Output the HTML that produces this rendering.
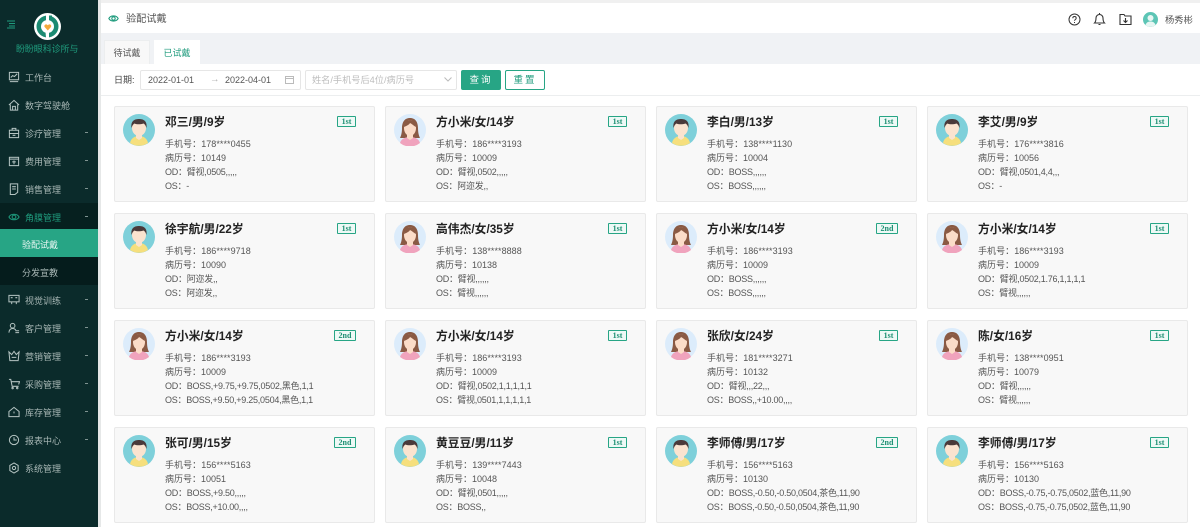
<!DOCTYPE html>
<html lang="zh"><head><meta charset="utf-8"><title>验配试戴</title>
<style>
*{box-sizing:border-box}
html,body{margin:0;padding:0}
body{width:1200px;height:527px;overflow:hidden;position:relative;background:#fff;font-family:"Liberation Sans","Noto Sans CJK SC",sans-serif;color:#555;filter:blur(.3px)}
.a{position:absolute;white-space:nowrap}
#side{left:0;top:0;width:98px;height:527px;background:#0b2b2b}
.m{position:absolute;left:0;width:98px;height:28px;line-height:28px;font-size:9px;color:#a9b8b6;white-space:nowrap}
.m span{position:absolute;left:25px;top:1px}
.m svg{position:absolute;left:8px;top:8px;width:12px;height:12px;fill:none;stroke:#b5c4c2;stroke-width:1.1}
.m i{position:absolute;left:85px;top:13px;width:3px;height:1px;background:#7f9391}
.card{position:absolute;width:261px;height:96px;background:#f8f8f8;border:1px solid #e9e9e9;border-radius:2px}
.card svg{position:absolute;left:8px;top:7px;width:32px;height:32px}
.card b{position:absolute;left:50px;top:7px;font-size:11.800px;line-height:16px;color:#222;white-space:nowrap;font-weight:700}
.card p{position:absolute;left:50px;margin:0;font-size:9px;line-height:14px;color:#555;white-space:nowrap}
.l1{top:30px;letter-spacing:.05px}.l2{top:44px}.l3{top:58px;letter-spacing:-.25px}.l4{top:72px;letter-spacing:-.25px}
.card em{position:absolute;left:222px;top:9px;width:19px;height:11px;border:1px solid #27a585;background:#eef9f6;border-radius:1px;color:#1b8f72;font:bold 8px/9px "Liberation Serif",serif;text-align:center}
.card em.n{left:219px;width:22px}
</style></head><body>
<svg width="0" height="0" style="position:absolute"><defs>
<g id="mm"><circle cx="16" cy="16" r="16" fill="#7ed0da"/><path d="M7 29c1-5 5-7 9-7s8 2 9 7a16 16 0 0 1-18 0z" fill="#f6df7d"/><path d="M13 20h6v4l-3 2-3-2z" fill="#fbe3cf"/><ellipse cx="16" cy="14" rx="7" ry="8" fill="#fbe3cf"/><path d="M8.500 14c-1-7 3-9 7.500-9s8.500 2 7.500 9c-1-3-2-4-3-4.500-3 1-7 1-9 0-1 .5-2 1.500-3 4.500z" fill="#4a3a3a"/></g>
<g id="ff"><circle cx="16" cy="16" r="16" fill="#dcecfb"/><path d="M16 4c-6 0-8 5-8 10 0 5-1 8-2 10h20c-1-2-2-5-2-10 0-5-2-10-8-10z" fill="#8a5a44"/><path d="M6 29c1-4 5-6 10-6s9 2 10 6a16 16 0 0 1-20 0z" fill="#f0a3bd"/><path d="M13 19h6v5l-3 2-3-2z" fill="#fbdcc8"/><ellipse cx="16" cy="14" rx="6" ry="8" fill="#fbdcc8"/><path d="M10 13c0-5 3-7 6-7s6 2 6 7c-2-1-4-3-6-4-1 2-4 3-6 4z" fill="#8a5a44"/></g>
</defs></svg>

<div class="a" style="left:0;top:0;width:1200px;height:3px;background:#f0f0f0"></div>

<!-- sidebar -->
<div class="a" id="side"></div>
<div class="a" style="left:98px;top:0;width:3px;height:527px;background:#e6e8e8"></div>
<svg class="a" style="left:6px;top:20px;width:10px;height:9px" viewBox="0 0 10 9"><path d="M1 1h8M3 3.500h6M3 6h6M1 8h8" stroke="#1f9b7d" stroke-width="1"/></svg>
<svg class="a" style="left:34px;top:13px;width:27px;height:27px" viewBox="0 0 27 27"><circle cx="13.500" cy="13.500" r="13.500" fill="#fff"/><circle cx="13.500" cy="13.500" r="11" fill="#1b8a72"/><circle cx="13.500" cy="13.500" r="6.500" fill="#fff"/><path d="M12 24.500l0-11h3v-11h-3v5l-1 6zM15 13v11.500h-3V13z" fill="#fff"/><path d="M15 2.500h3v3h-3z" fill="#1b8a72"/><path d="M13.800 17.500l-3.200-3.500c-1-2.200 1.700-3.700 3.200-1.700 1.500-2 4.200-.5 3.200 1.700z" fill="#f3a93c"/></svg>
<div class="a" style="left:16px;top:43px;width:66px;font-size:9px;line-height:12px;color:#1f9b7d;letter-spacing:-.1px">盼盼眼科诊所与</div>

<div class="m" style="top:63px"><svg viewBox="0 0 13 13"><rect x="1.500" y="1.500" width="10" height="8"/><path d="M3 7l2-2 2 1 3-3M2 11.500h9"/></svg><span>工作台</span></div>
<div class="m" style="top:91px"><svg viewBox="0 0 13 13"><path d="M1 6.500L6.500 1.500 12 6.500M2.500 6v6h8V6M5 12V8h3v4"/></svg><span>数字驾驶舱</span></div>
<div class="m" style="top:119px"><svg viewBox="0 0 13 13"><rect x="1.500" y="3.500" width="10" height="8"/><path d="M4.500 3.500V1.500h4v2M1.500 7h10M5 9h3"/></svg><span>诊疗管理</span><i></i></div>
<div class="m" style="top:147px"><svg viewBox="0 0 13 13"><rect x="1.500" y="2.500" width="10" height="9"/><path d="M1.500 4.500h10M6.500 6v4M4.500 7.500h4"/></svg><span>费用管理</span><i></i></div>
<div class="m" style="top:175px"><svg viewBox="0 0 13 13"><path d="M2.500 1h8v9l-3 2.500h-5zM4.500 4h4M4.500 6.500h4"/></svg><span>销售管理</span><i></i></div>
<div class="a" style="left:0;top:203px;width:98px;height:26px;background:#06201f"></div>
<div class="m" style="top:203px;color:#1f9b7d"><svg viewBox="0 0 13 13" style="stroke:#1f9b7d"><path d="M1 6.500c2-4 9-4 11 0-2 4-9 4-11 0z"/><circle cx="6.500" cy="6.500" r="2"/></svg><span>角膜管理</span><i></i></div>
<div class="a" style="left:0;top:229px;width:98px;height:28px;background:#27a585"></div>
<div class="m" style="top:230px;color:#e9f7f3"><span style="left:22px">验配试戴</span></div>
<div class="a" style="left:0;top:257px;width:98px;height:28px;background:#051c1c"></div>
<div class="m" style="top:258px"><span style="left:22px">分发宣教</span></div>
<div class="m" style="top:286px"><svg viewBox="0 0 13 13"><rect x="1" y="1.500" width="11" height="7"/><path d="M3 4h2M8 4h2M4 8.500V11M9 8.500V11"/></svg><span>视觉训练</span><i></i></div>
<div class="m" style="top:314px"><svg viewBox="0 0 13 13"><circle cx="5" cy="4" r="2.500"/><path d="M1 11.500c0-3 2-4.500 4-4.500s3 1 3.500 2M8 9.500h4M8 11.500h4"/></svg><span>客户管理</span><i></i></div>
<div class="m" style="top:342px"><svg viewBox="0 0 13 13"><path d="M1 2l3 3 2.500-3.500L9 5l3-3-1 9.500H2zM4 8h5"/></svg><span>营销管理</span><i></i></div>
<div class="m" style="top:370px"><svg viewBox="0 0 13 13"><path d="M1 1.500h2l1.500 7.500h7M3.500 4h9l-1 3"/><circle cx="5" cy="11" r=".8"/><circle cx="10" cy="11" r=".8"/></svg><span>采购管理</span><i></i></div>
<div class="m" style="top:398px"><svg viewBox="0 0 13 13"><path d="M1 6L6.500 1.500 12 6v5.500H1zM4 11.500h5M6.500 6v2"/></svg><span>库存管理</span><i></i></div>
<div class="m" style="top:426px"><svg viewBox="0 0 13 13"><circle cx="6.500" cy="6.500" r="5"/><path d="M6.500 3.500v3h3"/></svg><span>报表中心</span><i></i></div>
<div class="m" style="top:454px"><svg viewBox="0 0 13 13"><path d="M6.500 1l4.500 2.700v5.600L6.500 12 2 9.300V3.700z"/><circle cx="6.500" cy="6.500" r="1.800"/></svg><span>系统管理</span></div>

<!-- header -->
<svg class="a" style="left:108px;top:13px;width:11px;height:11px" viewBox="0 0 13 13" fill="none" stroke="#1f9b7d" stroke-width="1.300"><path d="M1 6.500c2-4 9-4 11 0-2 4-9 4-11 0z"/><circle cx="6.500" cy="6.500" r="2"/></svg>
<div class="a" style="left:126px;top:12px;font-size:10.200px;line-height:15px;color:#555">验配试戴</div>
<svg class="a" style="left:1068px;top:13px;width:13px;height:13px" viewBox="0 0 13 13" fill="none" stroke="#333"><circle cx="6.500" cy="6.500" r="5.500"/><path d="M4.800 5.200c0-2.200 3.400-2.200 3.400 0 0 1.300-1.700 1.300-1.700 2.600M6.500 9v1"/></svg>
<svg class="a" style="left:1093px;top:12px;width:13px;height:14px" viewBox="0 0 13 14" fill="none" stroke="#333" stroke-width="1.100"><path d="M1.500 11h10c-1.500-1.500-1.500-3-1.500-5a3.500 3.500 0 0 0-7 0c0 2 0 3.500-1.500 5zM5.500 12.500h2M6.500 1v1"/></svg>
<svg class="a" style="left:1119px;top:13px;width:13px;height:13px" viewBox="0 0 13 13" fill="none" stroke="#333" stroke-width="1.100"><path d="M1 1.500h4l1 1.500h6v8.500H1zM6.500 5v4.500M4.500 7.500l2 2 2-2"/></svg>
<svg class="a" style="left:1143px;top:12px;width:15px;height:15px" viewBox="0 0 15 15"><circle cx="7.500" cy="7.500" r="7.500" fill="#5cc5b5"/><circle cx="7.500" cy="6" r="3" fill="#e8f6f3"/><path d="M2.500 13c1-3 3-3.500 5-3.500s4 .5 5 3.500a7.500 7.500 0 0 1-10 0z" fill="#e8f6f3"/></svg>
<div class="a" style="left:1165px;top:13px;font-size:9.300px;line-height:14px;color:#555">杨秀彬</div>

<!-- tabs -->
<div class="a" style="left:101px;top:33px;width:1099px;height:31px;background:#f0f2f5"></div>
<div class="a" style="left:104px;top:40px;width:46px;height:24px;background:#f8f8f8;border:1px solid #eceeef;border-bottom:0;text-align:center;font-size:9px;line-height:25px;color:#555">待试戴</div>
<div class="a" style="left:154px;top:40px;width:46px;height:25px;background:#fff;text-align:center;font-size:9px;line-height:26px;color:#1f9b7d">已试戴</div>

<!-- filter -->
<div class="a" style="left:101px;top:95px;width:1099px;height:1px;background:#eceeef"></div>
<div class="a" style="left:114px;top:73px;font-size:9px;line-height:14px;color:#444">日期:</div>
<div class="a" style="left:140px;top:70px;width:161px;height:20px;border:1px solid #e6e6e6;border-radius:2px"></div>
<div class="a" style="left:148px;top:73px;font-size:9px;line-height:14px;color:#555">2022-01-01</div>
<div class="a" style="left:210px;top:73px;font-size:9.500px;line-height:14px;color:#aaa">→</div>
<div class="a" style="left:225px;top:73px;font-size:9px;line-height:14px;color:#555">2022-04-01</div>
<svg class="a" style="left:285px;top:75px;width:9px;height:9px" viewBox="0 0 9 9" fill="none" stroke="#bbb"><path d="M.5 1.500h8v7h-8zM.5 3.500h8"/></svg>
<div class="a" style="left:305px;top:70px;width:152px;height:20px;border:1px solid #e6e6e6;border-radius:2px"></div>
<div class="a" style="left:312px;top:73px;font-size:9.200px;line-height:14px;color:#bdbdbd">姓名/手机号后4位/病历号</div>
<svg class="a" style="left:444px;top:77px;width:8px;height:5px" viewBox="0 0 8 5" fill="none" stroke="#bbb"><path d="M.5.500l3.500 3.500 3.500-3.500"/></svg>
<div class="a" style="left:461px;top:70px;width:40px;height:20px;background:#27a585;border-radius:2px;color:#fff;text-align:center;font-size:9.500px;line-height:21px;letter-spacing:2px">查询</div>
<div class="a" style="left:505px;top:70px;width:40px;height:20px;border:1px solid #27a585;border-radius:2px;color:#1f9b7d;text-align:center;font-size:9.500px;line-height:19px;letter-spacing:2px">重置</div>

<!-- cards row 1 -->
<div class="card" style="left:114px;top:106px"><svg viewBox="0 0 32 32"><use href="#mm"/></svg><b>邓三/男/9岁</b><em>1st</em><p class="l1">手机号：178****0455</p><p class="l2">病历号：10149</p><p class="l3">OD：臂视,0505,,,,,</p><p class="l4">OS：-</p></div>
<div class="card" style="left:385px;top:106px"><svg viewBox="0 0 32 32"><use href="#ff"/></svg><b>方小米/女/14岁</b><em>1st</em><p class="l1">手机号：186****3193</p><p class="l2">病历号：10009</p><p class="l3">OD：臂视,0502,,,,,</p><p class="l4">OS：阿迩发,,</p></div>
<div class="card" style="left:656px;top:106px"><svg viewBox="0 0 32 32"><use href="#mm"/></svg><b>李白/男/13岁</b><em>1st</em><p class="l1">手机号：138****1130</p><p class="l2">病历号：10004</p><p class="l3">OD：BOSS,,,,,,</p><p class="l4">OS：BOSS,,,,,,</p></div>
<div class="card" style="left:927px;top:106px"><svg viewBox="0 0 32 32"><use href="#mm"/></svg><b>李艾/男/9岁</b><em>1st</em><p class="l1">手机号：176****3816</p><p class="l2">病历号：10056</p><p class="l3">OD：臂视,0501,4,4,,,</p><p class="l4">OS：-</p></div>
<!-- row 2 -->
<div class="card" style="left:114px;top:213px"><svg viewBox="0 0 32 32"><use href="#mm"/></svg><b>徐宇航/男/22岁</b><em>1st</em><p class="l1">手机号：186****9718</p><p class="l2">病历号：10090</p><p class="l3">OD：阿迩发,,</p><p class="l4">OS：阿迩发,,</p></div>
<div class="card" style="left:385px;top:213px"><svg viewBox="0 0 32 32"><use href="#ff"/></svg><b>高伟杰/女/35岁</b><em>1st</em><p class="l1">手机号：138****8888</p><p class="l2">病历号：10138</p><p class="l3">OD：臂视,,,,,,</p><p class="l4">OS：臂视,,,,,,</p></div>
<div class="card" style="left:656px;top:213px"><svg viewBox="0 0 32 32"><use href="#ff"/></svg><b>方小米/女/14岁</b><em class="n">2nd</em><p class="l1">手机号：186****3193</p><p class="l2">病历号：10009</p><p class="l3">OD：BOSS,,,,,,</p><p class="l4">OS：BOSS,,,,,,</p></div>
<div class="card" style="left:927px;top:213px"><svg viewBox="0 0 32 32"><use href="#ff"/></svg><b>方小米/女/14岁</b><em>1st</em><p class="l1">手机号：186****3193</p><p class="l2">病历号：10009</p><p class="l3">OD：臂视,0502,1.76,1,1,1,1</p><p class="l4">OS：臂视,,,,,,</p></div>
<!-- row 3 -->
<div class="card" style="left:114px;top:320px"><svg viewBox="0 0 32 32"><use href="#ff"/></svg><b>方小米/女/14岁</b><em class="n">2nd</em><p class="l1">手机号：186****3193</p><p class="l2">病历号：10009</p><p class="l3">OD：BOSS,+9.75,+9.75,0502,黑色,1,1</p><p class="l4">OS：BOSS,+9.50,+9.25,0504,黑色,1,1</p></div>
<div class="card" style="left:385px;top:320px"><svg viewBox="0 0 32 32"><use href="#ff"/></svg><b>方小米/女/14岁</b><em>1st</em><p class="l1">手机号：186****3193</p><p class="l2">病历号：10009</p><p class="l3">OD：臂视,0502,1,1,1,1,1</p><p class="l4">OS：臂视,0501,1,1,1,1,1</p></div>
<div class="card" style="left:656px;top:320px"><svg viewBox="0 0 32 32"><use href="#ff"/></svg><b>张欣/女/24岁</b><em>1st</em><p class="l1">手机号：181****3271</p><p class="l2">病历号：10132</p><p class="l3">OD：臂视,,,22,,,</p><p class="l4">OS：BOSS,,+10.00,,,,</p></div>
<div class="card" style="left:927px;top:320px"><svg viewBox="0 0 32 32"><use href="#ff"/></svg><b>陈/女/16岁</b><em>1st</em><p class="l1">手机号：138****0951</p><p class="l2">病历号：10079</p><p class="l3">OD：臂视,,,,,,</p><p class="l4">OS：臂视,,,,,,</p></div>
<!-- row 4 -->
<div class="card" style="left:114px;top:427px"><svg viewBox="0 0 32 32"><use href="#mm"/></svg><b>张可/男/15岁</b><em class="n">2nd</em><p class="l1">手机号：156****5163</p><p class="l2">病历号：10051</p><p class="l3">OD：BOSS,+9.50,,,,,</p><p class="l4">OS：BOSS,+10.00,,,,</p></div>
<div class="card" style="left:385px;top:427px"><svg viewBox="0 0 32 32"><use href="#mm"/></svg><b>黄豆豆/男/11岁</b><em>1st</em><p class="l1">手机号：139****7443</p><p class="l2">病历号：10048</p><p class="l3">OD：臂视,0501,,,,,</p><p class="l4">OS：BOSS,,</p></div>
<div class="card" style="left:656px;top:427px"><svg viewBox="0 0 32 32"><use href="#mm"/></svg><b>李师傅/男/17岁</b><em class="n">2nd</em><p class="l1">手机号：156****5163</p><p class="l2">病历号：10130</p><p class="l3">OD：BOSS,-0.50,-0.50,0504,茶色,11,90</p><p class="l4">OS：BOSS,-0.50,-0.50,0504,茶色,11,90</p></div>
<div class="card" style="left:927px;top:427px"><svg viewBox="0 0 32 32"><use href="#mm"/></svg><b>李师傅/男/17岁</b><em>1st</em><p class="l1">手机号：156****5163</p><p class="l2">病历号：10130</p><p class="l3">OD：BOSS,-0.75,-0.75,0502,蓝色,11,90</p><p class="l4">OS：BOSS,-0.75,-0.75,0502,蓝色,11,90</p></div>
</body></html>
